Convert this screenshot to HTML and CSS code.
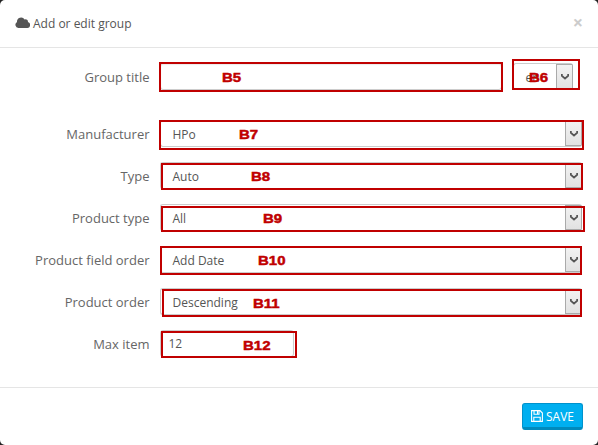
FILE: index.html
```html
<!DOCTYPE html>
<html lang="en">
<head>
<meta charset="utf-8">
<title>Add or edit group</title>
<link rel="stylesheet" href="styles.css">
</head>
<body>
<div class="modal">
  <header class="modal-header">
    <svg class="cloud" viewBox="0 0 15 11"><path d="M3.4 11A3.3 3.3 0 0 1 2 4.9 4.1 4.1 0 0 1 9.6 2.5 2.3 2.3 0 0 1 12.9 5.1 3 3 0 0 1 12 11Z"/></svg>
    <h1 class="title">Add or edit group</h1>
    <span class="close">×</span>
  </header>
  <main class="modal-body">
    <div class="row row-title"><label class="label">Group title</label><div class="field input wide"></div>
      <div class="field select lang"><span class="value">en</span><span class="arrow"><svg viewBox="0 0 8 7"><path d="M.8 1V2.8L4 5.6 7.2 2.8V1"/></svg></span></div></div>
    <div class="row"><label class="label">Manufacturer</label><div class="field select"><span class="value">HPo</span><span class="arrow"><svg viewBox="0 0 8 7"><path d="M.8 1V2.8L4 5.6 7.2 2.8V1"/></svg></span></div></div>
    <div class="row"><label class="label">Type</label><div class="field select"><span class="value">Auto</span><span class="arrow"><svg viewBox="0 0 8 7"><path d="M.8 1V2.8L4 5.6 7.2 2.8V1"/></svg></span></div></div>
    <div class="row"><label class="label">Product type</label><div class="field select"><span class="value">All</span><span class="arrow"><svg viewBox="0 0 8 7"><path d="M.8 1V2.8L4 5.6 7.2 2.8V1"/></svg></span></div></div>
    <div class="row"><label class="label">Product field order</label><div class="field select"><span class="value">Add Date</span><span class="arrow"><svg viewBox="0 0 8 7"><path d="M.8 1V2.8L4 5.6 7.2 2.8V1"/></svg></span></div></div>
    <div class="row"><label class="label">Product order</label><div class="field select"><span class="value">Descending</span><span class="arrow"><svg viewBox="0 0 8 7"><path d="M.8 1V2.8L4 5.6 7.2 2.8V1"/></svg></span></div></div>
    <div class="row"><label class="label">Max item</label><div class="field input small"><span class="value">12</span></div></div>
  </main>
  <footer class="modal-footer">
    <button class="save"><svg viewBox="0 0 12 12"><path d="M.6.6H9L11.4 3V11.4H.6ZM3 .6V4.2H8V.6M2.8 11.4V7.2H9.2V11.4M6.5 1V3.8"/></svg>SAVE</button>
  </footer>
</div>
<div class="mark b5"><span>B5</span></div>
<div class="mark b6"><span>B6</span></div>
<div class="mark b7"><span>B7</span></div>
<div class="mark b8"><span>B8</span></div>
<div class="mark b9"><span>B9</span></div>
<div class="mark b10"><span>B10</span></div>
<div class="mark b11"><span>B11</span></div>
<div class="mark b12"><span>B12</span></div>
</body>
</html>
```
FILE: styles.css
```css
* { box-sizing: border-box; }
body {
  margin: 0;
  height: 445px;
  overflow: hidden;
  background: #222;
  font-family: "Open Sans", sans-serif;
  color: #555;
}
.modal {
  height: 445px;
  display: flex;
  flex-direction: column;
  background: #fff;
  border-radius: 5px;
}
.modal-header {
  height: 48px;
  display: flex;
  align-items: center;
  padding: 0 15px;
  border-bottom: 1px solid #e5e5e5;
}
.cloud { width: 15px; height: 11px; margin: -2px 3px 0 0; fill: #555; }
.title { margin: 0; font-size: 12px; font-weight: 400; line-height: 16px; }
.close { margin: -3px 0 0 auto; font-size: 18px; line-height: 18px; font-weight: 700; color: #ccc; }
.modal-body {
  flex: 1;
  display: flex;
  flex-direction: column;
  gap: 15px;
  padding-top: 15px;
}
.row { height: 27px; display: flex; align-items: center; }
.row-title { margin-bottom: 15px; }
.label {
  width: 149.5px;
  margin-right: 10.5px;
  text-align: right;
  font-size: 13px;
  line-height: 18px;
  color: #666;
}
.field {
  height: 27px;
  display: flex;
  align-items: center;
  border: 1px solid #ccc;
  border-radius: 3px;
  font-size: 12px;
}
.input { box-shadow: inset 0 1px 1px rgba(0, 0, 0, .08); padding-left: 7.5px; }
.wide { width: 342px; }
.small { width: 134px; }
.select { width: 422px; padding-left: 11.5px; }
.select .value { padding-top: 2px; }
.lang { width: 60px; margin-left: 11px; }
.arrow {
  width: 16px;
  height: 25px;
  margin-left: auto;
  display: flex;
  align-items: center;
  justify-content: center;
  border: 1px solid #aaa;
  border-right-width: 0;
  background: linear-gradient(#f2f2f2, #e2e2e2);
}
.select { border-right-color: #aaa; }
.arrow svg { width: 8px; height: 7px; fill: none; stroke: #555; stroke-width: 1.9; }
.modal-footer {
  height: 58px;
  display: flex;
  justify-content: flex-end;
  padding: 15px 15px 0 0;
  border-top: 1px solid #e5e5e5;
}
.save {
  width: 61px;
  height: 27px;
  display: flex;
  align-items: center;
  justify-content: center;
  gap: 3px;
  padding: 1px 0 0;
  border: 1px solid #0092cc;
  border-bottom: 3px solid #008abd;
  border-radius: 3px;
  background: #00aff0;
  color: #fff;
  font: 12px "Open Sans", sans-serif;
}
.save svg { width: 12px; height: 12px; fill: none; stroke: #fff; stroke-width: 1.1; }

/* Callout frames drawn over the form */
.mark {
  position: absolute;
  display: flex;
  align-items: center;
  border: 2px solid #c00000;
  color: #c00000;
  font: 700 13.5px/14px "Liberation Sans", sans-serif;
  -webkit-text-stroke: .5px #c00000;
}
.mark span { transform: scaleX(1.11); transform-origin: 0 50%; }
.b5 { left: 159px; top: 62px; width: 344px; height: 30px; padding: 2px 0 0 60.5px; }
.b6 { left: 512px; top: 59px; width: 68px; height: 31px; padding: 7px 0 0 15px; }
.b7 { left: 159px; top: 120px; width: 425px; height: 30px; padding-left: 77.5px; }
.b8 { left: 161px; top: 163px; width: 422px; height: 27px; padding-left: 87.5px; padding-top: 1px; }
.b9 { left: 161px; top: 206px; width: 424px; height: 26px; padding-left: 99.5px; }
.b10 { left: 160px; top: 246px; width: 422px; height: 29px; padding-left: 95.5px; padding-top: 1px; }
.b11 { left: 162px; top: 289px; width: 420px; height: 28px; padding-left: 88.5px; padding-top: 2px; }
.b12 { left: 161px; top: 331px; width: 136px; height: 27px; padding-left: 79.5px; padding-top: 2px; }
```
